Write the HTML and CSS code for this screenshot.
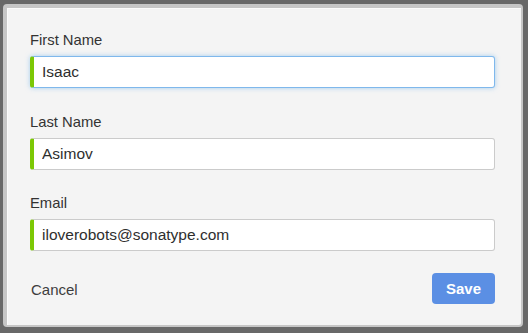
FILE: index.html
```html
<!DOCTYPE html>
<html lang="en">
<head>
    <meta charset="UTF-8">
    <meta name="viewport" content="width=device-width, initial-scale=1.0">
    <title>Edit User</title>
    <link rel="stylesheet" href="styles.css">
</head>
<body>
    <div class="user-form">
        <div class="input-group">
            <label class="field-label" for="firstName">First Name</label>
            <input class="text-input is-focused" id="firstName" type="text" value="Isaac">
        </div>

        <div class="input-group">
            <label class="field-label" for="lastName">Last Name</label>
            <input class="text-input" id="lastName" type="text" value="Asimov">
        </div>

        <div class="input-group">
            <label class="field-label" for="email">Email</label>
            <input class="text-input" id="email" type="text" value="iloverobots@sonatype.com">
        </div>

        <div class="form-footer">
            <button class="cancel-button">Cancel</button>
            <button class="save-button">Save</button>
        </div>
    </div>
</body>
</html>
```

FILE: styles.css
```css
body {
    font-family: "Liberation Sans", Arial, sans-serif;
    background-color: #686868;
    margin: 0;
    padding: 4px 5px 6px 3px;
    height: 333px;
    box-sizing: border-box;
}
.user-form {
    height: 100%;
    box-sizing: border-box;
    background-color: #f4f4f4;
    border-style: solid;
    border-color: #c6c6c6;
    border-width: 4px 2px 2px 4px;
    border-radius: 4px;
    box-shadow: inset 1px 1px 0 #fbfbfb;
    padding: 22px 26px 0 23px;
}
.input-group {
    display: flex;
    flex-direction: column;
    gap: 6px;
    margin-bottom: 23.5px;
}
.field-label {
    font-size: 14.8px;
    line-height: 20px;
    color: #333;
}
.text-input {
    height: 32px;
    box-sizing: border-box;
    font-family: inherit;
    font-size: 15.5px;
    color: #2e2e2e;
    background-color: #fff;
    border: 1px solid #cbcbcb;
    border-left: 4px solid #7cc805;
    border-radius: 3px;
    padding: 0 8px;
    outline: none;
}
.text-input.is-focused {
    border-color: #7fb8ec;
    border-left-color: #7cc805;
    box-shadow: 0 0 5px rgba(102, 175, 233, 0.55);
}
.form-footer {
    display: flex;
    justify-content: space-between;
    align-items: center;
    margin-top: -1.5px;
}
.cancel-button {
    font-family: inherit;
    font-size: 15px;
    color: #3d3d3d;
    background: none;
    border: none;
    padding: 0 0 0 1px;
    margin-top: 2px;
    cursor: pointer;
}
.save-button {
    width: 63px;
    height: 31px;
    font-family: inherit;
    font-size: 15px;
    font-weight: bold;
    color: #fff;
    background-color: #5b8fe4;
    border: none;
    border-radius: 4px;
    cursor: pointer;
}
```
